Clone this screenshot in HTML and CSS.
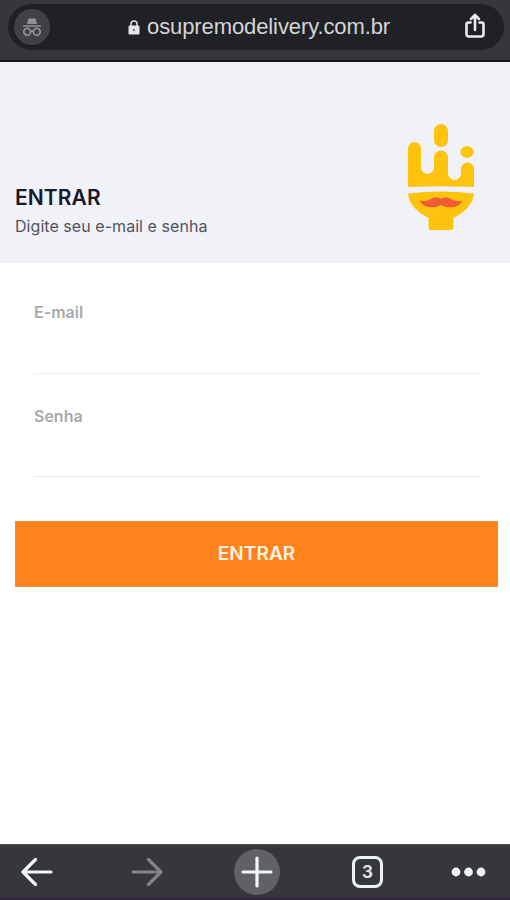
FILE: index.html
```html
<!DOCTYPE html>
<html lang="pt-BR">
<head>
<meta charset="utf-8">
<meta name="viewport" content="width=device-width, initial-scale=1">
<title>O Supremo Delivery</title>
<link rel="stylesheet" href="styles.css">
</head>
<body>
<div class="screen">
  <header class="topbar">
    <div class="address">
      <span class="incognito">
        <svg width="20" height="20" viewBox="0 0 20 20" fill="none" stroke="#919296" stroke-width="1.7">
          <path d="M5 7 6.3 2.2Q6.6 1 7.7 1.3L10 1.8 12.3 1.3Q13.400 1 13.7 2.2L15 7Z" fill="#919296" stroke="none"/>
          <path d="M1 9h18M8.600 14.400Q10 13.400 11.400 14.400"/>
          <circle cx="5.200" cy="14.700" r="3.400"/><circle cx="14.800" cy="14.700" r="3.400"/>
        </svg>
      </span>
      <span class="site">
        <svg width="12" height="15" viewBox="0 0 12 15">
          <path d="M3 6V4a3 3 0 0 1 6 0v2" fill="none" stroke="#dedfe1" stroke-width="1.500"/>
          <rect x=".5" y="5.500" width="11" height="9" rx="1.300" fill="#e6e7e9"/>
          <circle cx="6" cy="10" r="1.200" fill="#77787c"/>
        </svg>
        <span class="url">osupremodelivery.com.br</span>
      </span>
      <svg class="share" width="22" height="26" viewBox="0 0 22 26" fill="none" stroke="#ececee" stroke-width="2.600" stroke-linecap="round" stroke-linejoin="round">
        <path d="M6.500 9.500H4.500Q2.500 9.500 2.500 11.500v9.500q0 2.500 2.500 2.500h12q2.500 0 2.500-2.500V11.500q0-2-2-2H15.500M11 17V2.500M7 6 11 2l4 4"/>
      </svg>
    </div>
  </header>
  <main>
    <section class="hero">
      <div>
        <h1>ENTRAR</h1>
        <p class="hint">Digite seu e-mail e senha</p>
      </div>
      <svg class="logo" width="68" height="108" viewBox="0 0 68 108" fill="#fec30d">
        <rect x="27" y="0" width="14" height="23" rx="7"/>
        <ellipse cx="60" cy="28" rx="6.700" ry="5.800"/>
        <path d="M1 63V24.500a6.500 6.500 0 0 1 13 0V43.500a6.500 6.500 0 0 0 13 0V33.500a7 7 0 0 1 14 0V49.500a6.500 6.500 0 0 0 13 0V45a6.500 6.500 0 0 1 13 0V63Q34 61.500 1 63Z"/>
        <path d="M1 69.500Q34 65.500 67 69.500C66 81 57 88.500 46.500 94V104q0 2-2 2h-21q-2 0-2-2V94C11 88.500 2 81 1 69.500Z"/>
        <path fill="#ef5b37" d="M12.500 76.500Q18 78.500 23 75.500C28 72.800 31 73 34 75C37 73 40 72.800 45 75.500Q50 78.500 55.500 76.500C52 84 41 85 34 81C27 85 16 84 12.500 76.500Z"/>
      </svg>
    </section>
    <form class="login">
      <label class="field"><span>E-mail</span><input type="email"></label>
      <label class="field"><span>Senha</span><input type="password"></label>
      <button type="button">ENTRAR</button>
    </form>
  </main>
  <nav class="bottombar">
    <svg width="32" height="28" viewBox="0 0 32 28" class="bright"><path d="M30 14H2M14.500 1.500 2 14l12.500 12.500"/></svg>
    <svg width="32" height="28" viewBox="0 0 32 28" class="dim"><path d="M2 14H30M17.500 1.500 30 14 17.500 26.500"/></svg>
    <span class="plus"><svg width="32" height="32" viewBox="0 0 32 32" class="bright"><path d="M2 16H30M16 2V30"/></svg></span>
    <span class="tabs">3</span>
    <svg width="36" height="10" viewBox="0 0 36 10" fill="#eff2f4"><circle cx="5" cy="5" r="4.400"/><circle cx="17.500" cy="5" r="4.400"/><circle cx="30" cy="5" r="4.400"/></svg>
  </nav>
</div>
</body>
</html>
```

FILE: styles.css
```css
* { box-sizing: border-box; }
body { margin: 0; background: #fff; font-family: Inter, "Liberation Sans", sans-serif; }
svg { display: block; flex: none; }
h1, p { margin: 0; }
.screen { height: 900px; display: flex; flex-direction: column; }
main { flex: 1; }

.topbar { height: 62px; padding: 4px 6px 0 8px; background: #36373b; border-bottom: 2px solid #151619; }
.address { height: 46px; border-radius: 23px; background: #202124; display: flex; align-items: center; justify-content: space-between; padding: 0 18px 0 6px; }
.incognito { width: 36px; height: 36px; border-radius: 50%; background: #414145; display: grid; place-items: center; }
.site { display: flex; align-items: center; gap: 7px; margin-left: 4px; }
.url { width: 243px; font: 22px/28px "Liberation Sans", Arial, sans-serif; letter-spacing: -.1px; color: #d4d5d7; white-space: nowrap; }
.share { margin-bottom: 2px; }

.hero { height: 201px; background: #f1f2f7; display: flex; justify-content: space-between; padding: 62px 35px 0 15px; }
h1 { margin-top: 61px; font-size: 21px; line-height: 26px; font-weight: 600; letter-spacing: .1px; color: #191a2b; }
.hint { margin-top: 4px; font-size: 16px; line-height: 22px; letter-spacing: .05px; color: #51525e; white-space: nowrap; }

.login { padding: 38px 12px 0 15px; }
.field { display: block; height: 73px; margin: 0 18px 31px 19px; border-bottom: 1px solid #ebebeb; }
.field span { display: block; font-size: 16px; line-height: 22px; font-weight: 600; color: #a8a8a8; }
.field input { display: block; width: 100%; height: 40px; padding: 0; border: 0; outline: 0; background: transparent; font: inherit; }
.field + .field { height: 72px; margin-bottom: 0; }
button { display: block; width: 100%; height: 66px; margin-top: 44px; padding: 0; border: 1px solid #f58b32; background: #ff821b; color: #fff2e5; font: 600 19px/24px Inter, sans-serif; letter-spacing: .1px; }

.bottombar { height: 56px; padding: 2px 0 0 21px; background: #35373b; border-top: 1px solid #505255; border-bottom: 3px solid #30293a; display: grid; grid-template-columns: 110px 103px 118px 99px 36px; align-items: center; }
.bright, .dim { fill: none; stroke: #f2f5f7; stroke-width: 3.200; stroke-linecap: round; stroke-linejoin: round; }
.dim { stroke: #818385; }
.plus { width: 46px; height: 46px; border-radius: 50%; background: #606265; display: grid; place-items: center; }
.tabs { width: 31px; height: 32px; border: 3px solid #eff2f4; border-radius: 8px; color: #dfe2e5; font-size: 17px; line-height: 26px; font-weight: 700; text-align: center; }
```
